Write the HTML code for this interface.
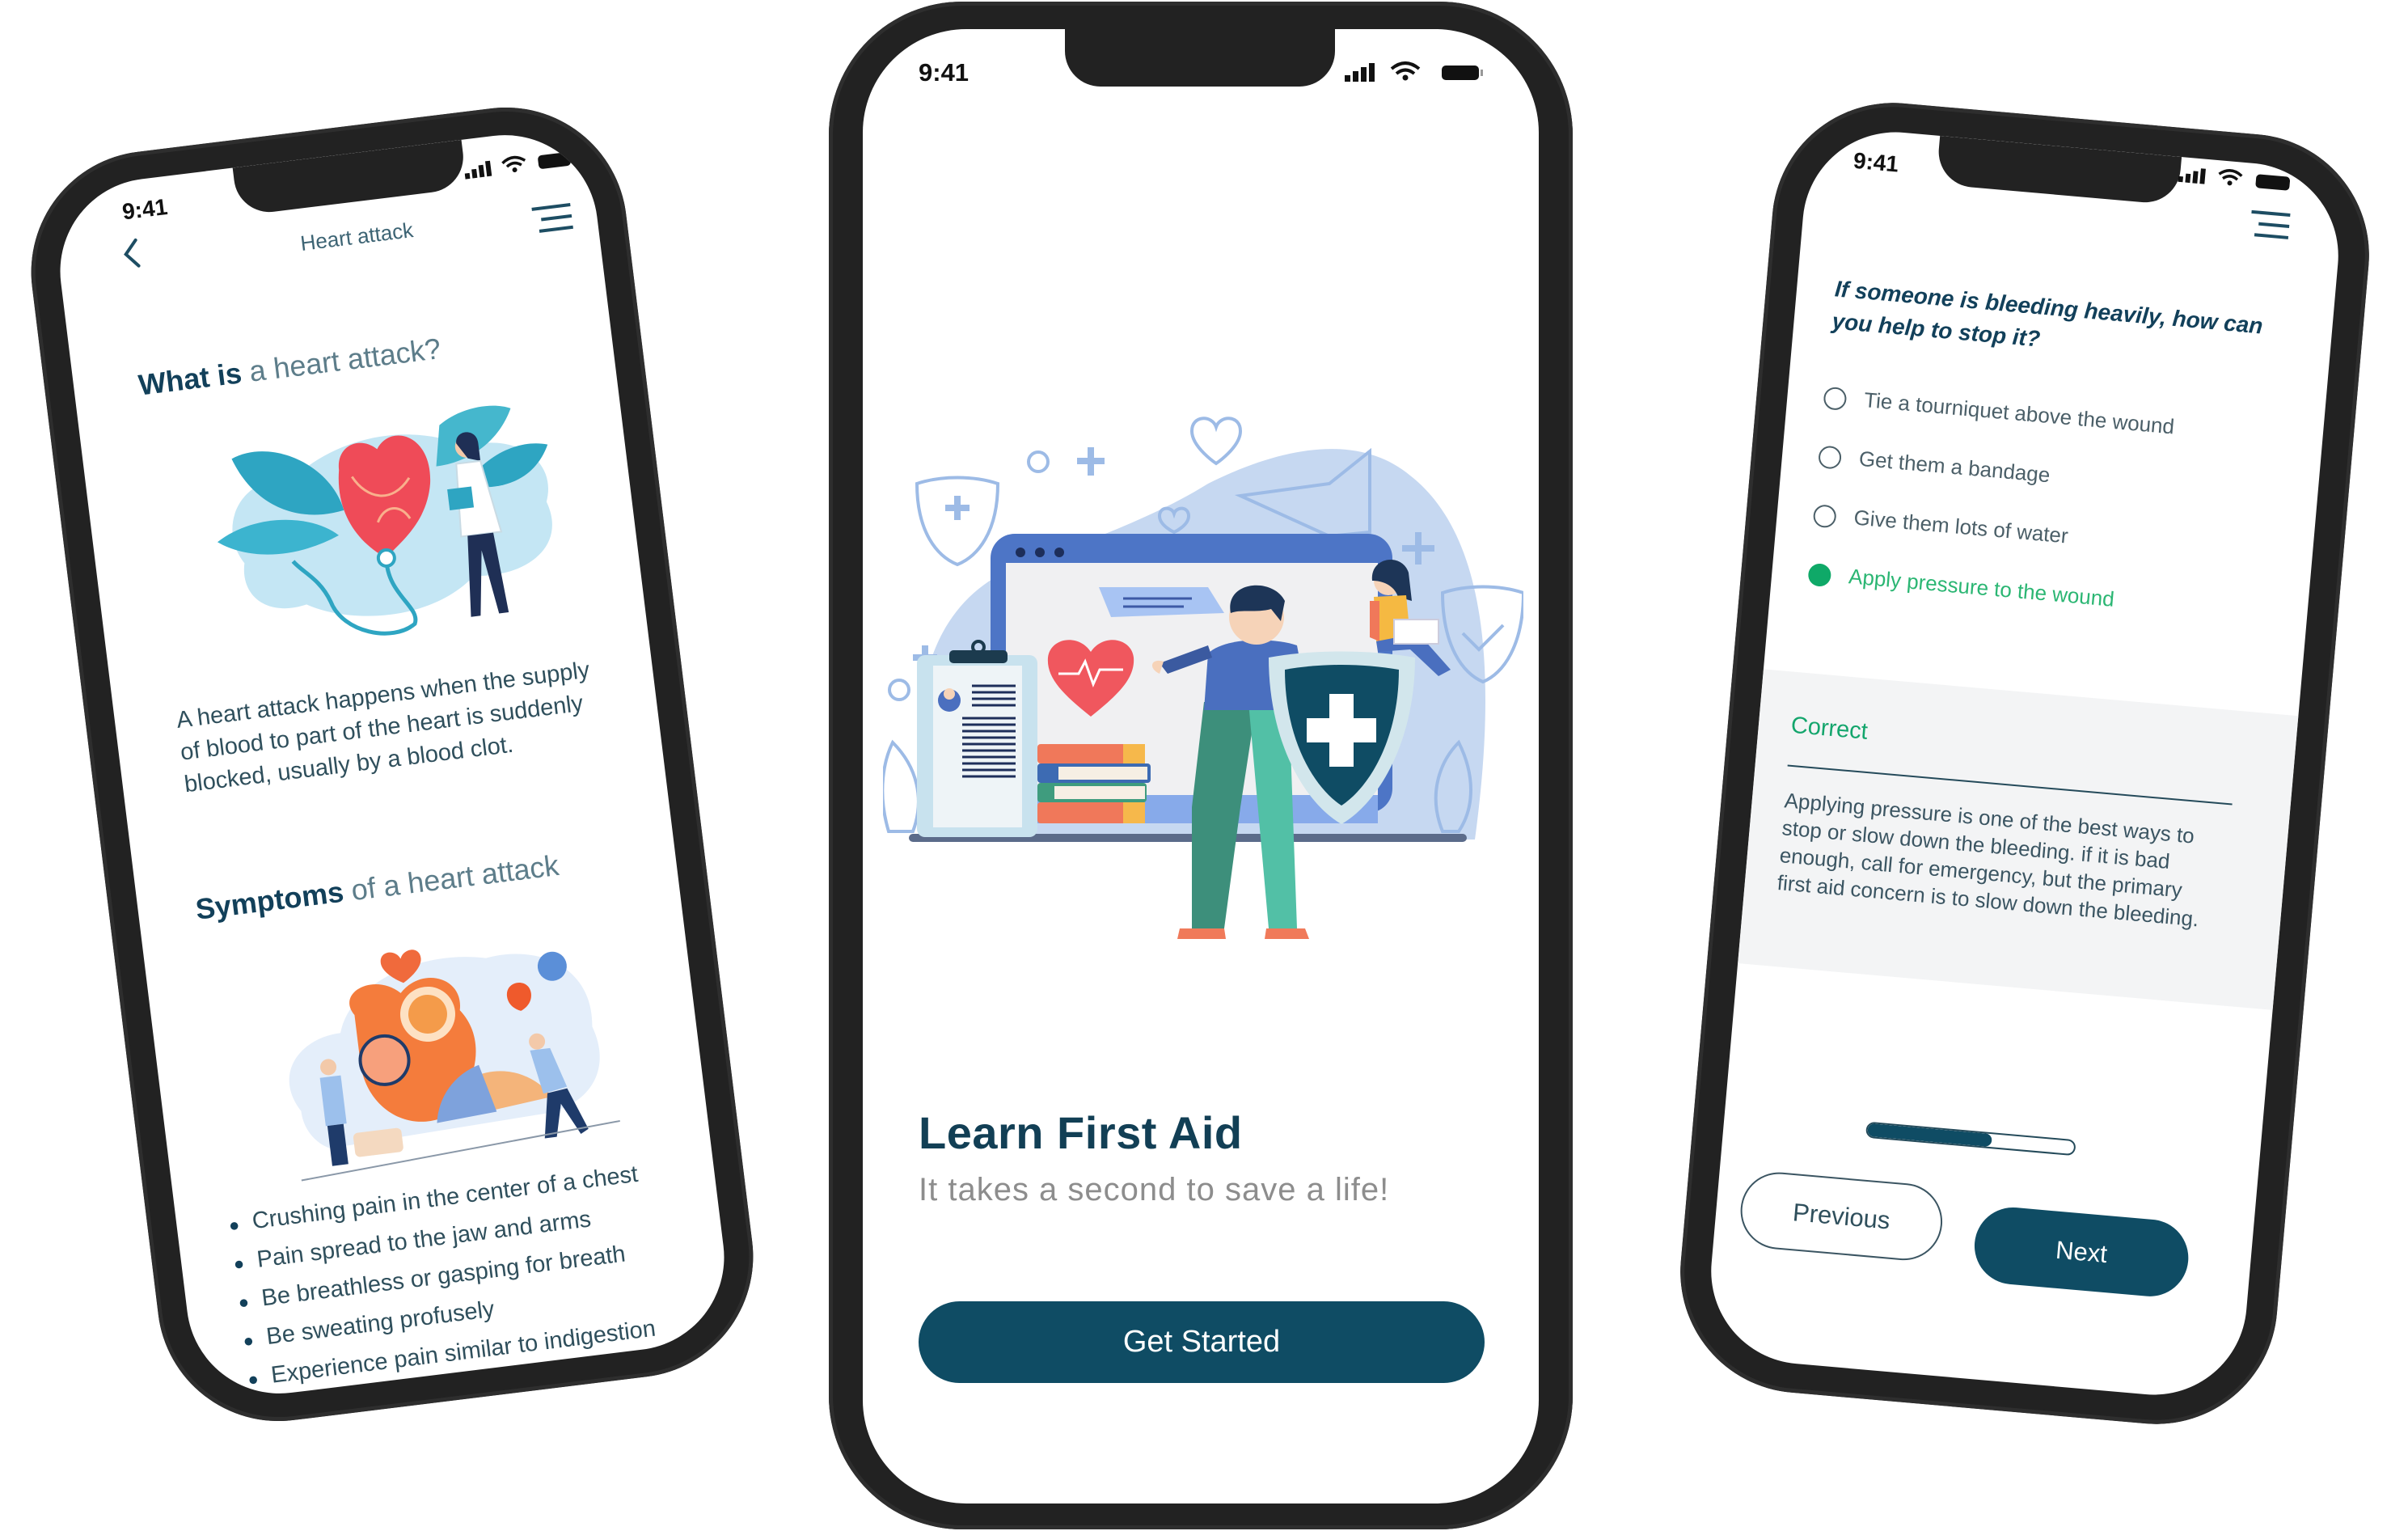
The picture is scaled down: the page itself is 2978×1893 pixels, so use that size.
<!DOCTYPE html>
<html><head><meta charset="utf-8"><style>
*{margin:0;padding:0;box-sizing:border-box}
body{width:2978px;height:1893px;background:#fff;position:relative;overflow:hidden;font-family:"Liberation Sans",sans-serif}
.phone{position:absolute;background:#222;box-shadow:inset 0 0 0 5px #2e2e2e}
.screen{position:absolute;background:#fff;overflow:hidden}
.a{position:absolute;white-space:nowrap}
.notch{position:absolute;background:#222;border-radius:0 0 44px 44px}
</style></head><body>

<!-- LEFT PHONE -->
<div class="phone" style="left:115px;top:155px;width:740px;height:1580px;border-radius:150px;transform:rotate(-7deg)">
 <div class="screen" style="left:36px;top:34px;width:668px;height:1512px;border-radius:115px">
  <div class="notch" style="left:228px;top:0;width:285px;height:60px"></div>
  <div class="a" style="left:86px;top:22px;font-size:28px;font-weight:bold;color:#111">9:41</div>
  <svg class="a" style="left:512px;top:26px" width="140" height="26" viewBox="0 0 140 26"><rect x="0" y="16" width="6" height="7" fill="#111"/><rect x="9" y="12" width="6" height="11" fill="#111"/><rect x="18" y="8" width="6" height="15" fill="#111"/><rect x="27" y="4" width="6" height="19" fill="#111"/><path d="M48 9 Q62 -2 76 9 M53 14 Q62 7 71 14" stroke="#111" stroke-width="3.5" fill="none"/><circle cx="62" cy="19" r="3" fill="#111"/><rect x="92" y="5" width="40" height="17" rx="5" fill="#111"/></svg>
  <svg class="a" style="left:76px;top:70px" width="30" height="40"><path d="M22 4 L8 20 L22 36" stroke="#1d4d63" stroke-width="4" fill="none" stroke-linecap="round"/></svg>
  <div class="a" style="left:300px;top:88px;font-size:26px;color:#3d6474">Heart attack</div>
  <svg class="a" style="left:585px;top:92px" width="56" height="40"><path d="M4 4H52M14 18H52M10 32H52" stroke="#1d4d63" stroke-width="4"/></svg>
  <div class="a" style="left:80px;top:232px;font-size:36px;color:#5d7d8a"><b style="color:#12405a">What is</b> a heart attack?</div>
  <svg class="a" style="left:143px;top:317px" width="440" height="290" viewBox="0 0 440 290">
   <path d="M40 170 C10 120 50 60 110 75 C170 30 260 20 330 60 C390 50 440 90 420 140 C440 200 380 230 320 220 C260 270 160 260 110 230 C60 240 30 210 40 170Z" fill="#c4e6f4"/>
   <path d="M40 40 C90 20 160 60 170 120 C110 130 60 100 40 40Z" fill="#2ea5c2"/>
   <path d="M10 140 C60 110 130 120 160 150 C110 170 50 170 10 140Z" fill="#3cb4cf"/>
   <path d="M300 30 C330 10 370 10 390 20 C370 60 330 80 290 80Z" fill="#45b7cd"/>
   <path d="M330 100 C360 70 400 60 430 70 C410 110 370 120 330 110Z" fill="#2ea5c2"/>
   <path d="M170 70 C170 40 200 30 220 50 C240 20 290 40 280 100 C270 150 230 170 215 185 C180 160 160 120 170 70Z" fill="#ef4b58"/>
   <path d="M185 80 C200 110 230 120 255 90 M210 140 C220 120 240 120 250 140" stroke="#f9b08c" stroke-width="3" fill="none"/>
   <path d="M215 185 C210 230 250 250 240 270 C210 290 150 270 140 230 C130 200 110 190 100 175" stroke="#2ea5c2" stroke-width="5" fill="none"/>
   <circle cx="215" cy="185" r="10" fill="#fff" stroke="#2ea5c2" stroke-width="4"/>
   <circle cx="330" cy="60" r="14" fill="#f3c9a9"/><path d="M318 55 C318 38 345 38 345 58 L345 80 L330 75Z" fill="#1f2f55"/>
   <path d="M315 80 L345 80 L360 170 L310 170Z" fill="#fff" stroke="#c9dbe4" stroke-width="2"/>
   <rect x="300" y="110" width="30" height="26" fill="#2ea5c2"/>
   <path d="M318 170 L310 270 L322 270 L333 190 L345 270 L357 270 L350 170Z" fill="#1f2f55"/>
  </svg>
  <div class="a" style="left:76px;top:650px;font-size:29px;line-height:40px;color:#2f4f5c">A heart attack happens when the supply<br>of blood to part of the heart is suddenly<br>blocked, usually by a blood clot.</div>
  <div class="a" style="left:71px;top:884px;font-size:36px;color:#5d7d8a"><b style="color:#12405a">Symptoms</b> of a heart attack</div>
  <svg class="a" style="left:140px;top:968px" width="420" height="290" viewBox="0 0 420 290">
   <path d="M30 200 C0 150 40 110 90 110 C110 50 200 20 280 40 C350 30 410 70 400 140 C420 200 380 240 320 240 L60 250 C40 240 30 220 30 200Z" fill="#e4eefa"/>
   <path d="M110 90 C90 60 140 40 170 70 C200 40 250 60 240 100 C270 140 250 200 200 230 C150 240 110 200 110 150 Z" fill="#f47c3c"/>
   <circle cx="200" cy="100" r="34" fill="#fde1c3"/><circle cx="200" cy="100" r="24" fill="#f49b4a"/>
   <circle cx="140" cy="150" r="30" fill="#f7a07c" stroke="#1f3b6a" stroke-width="4"/>
   <path d="M150 30 C150 15 170 15 175 28 C180 15 200 15 200 30 C200 45 175 58 175 58 C175 58 150 45 150 30Z" fill="#f06a3c"/>
   <path d="M195 235 A80 80 0 0 1 340 220 Z" fill="#f4b47a"/><path d="M195 235 A80 80 0 0 1 255 170 L270 230Z" fill="#7ea2dc"/>
   <path d="M300 90 C300 70 330 70 330 90 C330 105 315 110 315 110 C315 110 300 105 300 90Z" fill="#ef5a2c"/>
   <circle cx="360" cy="60" r="18" fill="#5b8fd8"/>
   <circle cx="70" cy="150" r="10" fill="#f3c9a9"/><rect x="58" y="162" width="26" height="60" fill="#9cc0ec"/><rect x="60" y="222" width="20" height="50" fill="#1f3b6a"/>
   <circle cx="330" cy="150" r="10" fill="#f3c9a9"/><path d="M320 160 L345 160 L360 210 L330 215Z" fill="#9cc0ec"/><path d="M335 215 L325 270 L340 270 L350 230 L370 270 L380 265 L360 212Z" fill="#1f3b6a"/>
   <rect x="90" y="235" width="60" height="30" rx="6" fill="#f4d9c0"/>
   <path d="M20 285 L420 260" stroke="#8a98a8" stroke-width="2"/>
  </svg>
  <div class="a" style="left:64px;top:1273px;font-size:29px;line-height:47px;color:#2f4f5c">
   <div><span style="font-size:22px;color:#12405a">●</span>&nbsp; Crushing pain in the center of a chest</div>
   <div><span style="font-size:22px;color:#12405a">●</span>&nbsp; Pain spread to the jaw and arms</div>
   <div><span style="font-size:22px;color:#12405a">●</span>&nbsp; Be breathless or gasping for breath</div>
   <div><span style="font-size:22px;color:#12405a">●</span>&nbsp; Be sweating profusely</div>
   <div><span style="font-size:22px;color:#12405a">●</span>&nbsp; Experience pain similar to indigestion</div>
  </div>
 </div>
</div>

<!-- CENTER PHONE -->
<div class="phone" style="left:1025px;top:2px;width:920px;height:1889px;border-radius:165px">
 <div class="screen" style="left:42px;top:34px;width:836px;height:1823px;border-radius:128px">
  <div class="notch" style="left:250px;top:0;width:334px;height:71px"></div>
  <div class="a" style="left:69px;top:36px;font-size:31px;font-weight:bold;color:#111">9:41</div>
  <svg class="a" style="left:596px;top:38px" width="180" height="30" viewBox="0 0 180 30"><rect x="0" y="19" width="7" height="8" fill="#111"/><rect x="10" y="14" width="7" height="13" fill="#111"/><rect x="20" y="9" width="7" height="18" fill="#111"/><rect x="30" y="4" width="7" height="23" fill="#111"/><path d="M58 11 Q75 -3 92 11 M64 17 Q75 8 86 17" stroke="#111" stroke-width="4" fill="none"/><circle cx="75" cy="22" r="3.5" fill="#111"/><rect x="120" y="7" width="46" height="18" rx="5" fill="#111"/><rect x="168" y="12" width="3" height="8" fill="#999"/></svg>
  <svg class="a" style="left:25px;top:477px" width="792" height="650" viewBox="1098 515 792 650">
   <path d="M1150 1040 C1130 900 1140 780 1230 720 C1320 680 1420 650 1500 600 C1600 550 1690 540 1750 590 C1840 660 1860 820 1830 1040 Z" fill="#c6d8f1"/>
   <g fill="none" stroke="#9dbbe6" stroke-width="4">
    <path d="M1140 600 C1170 590 1210 590 1240 600 C1240 660 1215 690 1190 700 C1165 690 1140 660 1140 600Z"/>
    <path d="M1175 630H1205M1190 615V645" stroke-width="8"/>
    <circle cx="1290" cy="573" r="12"/>
    <path d="M1355 555V590M1338 572H1372" stroke-width="8"/>
    <path d="M1480 535 C1480 515 1505 515 1510 530 C1515 515 1540 515 1540 535 C1540 555 1510 575 1510 575 C1510 575 1480 555 1480 535Z"/>
    <path d="M1540 615 L1650 600 L1700 560 L1700 660 L1650 665 Z"/>
    <path d="M1760 660V700M1740 680H1780" stroke-width="8"/>
    <path d="M1790 735 C1820 725 1860 725 1890 735 C1890 800 1865 835 1840 845 C1815 835 1790 800 1790 735Z"/>
    <path d="M1815 785 L1835 805 L1865 775"/>
    <circle cx="1118" cy="855" r="12"/>
    <path d="M1150 800V830M1135 815H1165" stroke-width="8"/>
    <path d="M1105 1030 C1090 980 1100 940 1110 920 C1140 950 1150 990 1135 1030Z"/>
    <path d="M1790 1030 C1770 980 1790 940 1810 920 C1830 960 1830 1000 1810 1030Z"/>
    <path d="M1440 640 C1440 628 1455 628 1458 637 C1461 628 1476 628 1476 640 C1476 652 1458 660 1458 660 C1458 660 1440 652 1440 640Z"/>
   </g>
   <rect x="1231" y="662" width="497" height="345" rx="30" fill="#4d75c6"/>
   <rect x="1250" y="698" width="460" height="290" fill="#f0f0f2"/>
   <circle cx="1268" cy="685" r="6" fill="#1d2e5a"/><circle cx="1292" cy="685" r="6" fill="#1d2e5a"/><circle cx="1316" cy="685" r="6" fill="#1d2e5a"/>
   <rect x="1250" y="985" width="460" height="35" fill="#87aaea"/>
   <path d="M1365 728 L1500 728 L1520 760 L1380 765Z" fill="#a8c4f3"/>
   <path d="M1395 742H1480M1395 752H1470" stroke="#3d5aa6" stroke-width="3"/>
   <path d="M1355 888 C1320 860 1300 840 1302 815 C1305 790 1340 785 1355 808 C1370 785 1405 790 1408 815 C1410 840 1390 860 1355 888Z" fill="#f0575e"/>
   <path d="M1315 835 H1340 L1348 820 L1358 848 L1366 830 H1395" stroke="#fff" stroke-width="3" fill="none"/>
   <rect x="1130" y="1033" width="690" height="10" rx="5" fill="#5b6b8a"/>
   <rect x="1140" y="812" width="149" height="225" rx="10" fill="#c8e2ee"/>
   <rect x="1160" y="825" width="110" height="200" fill="#eef4f7"/>
   <rect x="1180" y="806" width="72" height="16" rx="5" fill="#1c3b4e"/><circle cx="1216" cy="802" r="7" fill="none" stroke="#1c3b4e" stroke-width="4"/>
   <circle cx="1180" cy="868" r="14" fill="#4b6fbf"/><circle cx="1180" cy="860" r="7" fill="#f6d3b8"/>
   <g stroke="#1d2e5a" stroke-width="3"><path d="M1208 850H1262M1208 858H1262M1208 866H1262M1208 874H1262M1196 890H1262M1196 898H1262M1196 906H1262M1196 914H1262M1196 922H1262M1196 930H1262M1196 938H1262M1196 946H1262M1196 954H1262M1196 962H1262"/></g>
   <rect x="1289" y="922" width="133" height="24" rx="4" fill="#f0785a"/><rect x="1395" y="922" width="27" height="24" fill="#f6b84b"/>
   <rect x="1289" y="946" width="140" height="24" rx="4" fill="#3d6bb3"/><rect x="1315" y="950" width="110" height="16" fill="#f6efe4"/>
   <rect x="1289" y="970" width="135" height="24" rx="4" fill="#3f9c7e"/><rect x="1310" y="974" width="112" height="16" fill="#f6efe4"/>
   <rect x="1289" y="994" width="133" height="26" rx="4" fill="#f0785a"/><rect x="1395" y="994" width="27" height="26" fill="#f6b84b"/>
   <circle cx="1723" cy="720" r="18" fill="#f6d3b8"/><path d="M1703 720 C1700 690 1740 685 1748 710 L1752 745 L1735 740 C1730 725 1715 720 1703 720Z" fill="#1d3557"/>
   <path d="M1705 740 L1745 738 L1750 790 L1708 795Z" fill="#f5b942"/><path d="M1700 745 L1712 745 L1712 795 L1700 790Z" fill="#f0785a"/>
   <path d="M1708 795 L1760 785 L1800 830 L1785 838 L1750 805 L1710 808Z" fill="#4a6fbf"/>
   <rect x="1730" y="768" width="55" height="30" fill="#fff" stroke="#ccd" stroke-width="2"/>
   <path d="M1480 1000 L1495 870 L1560 870 L1540 1000 L1520 1150 L1480 1150Z" fill="#3d8f7b"/>
   <path d="M1550 870 L1600 870 L1610 1150 L1575 1150Z" fill="#52c0a6"/>
   <path d="M1465 1150 L1520 1150 L1522 1163 L1462 1163Z" fill="#f07a5a"/><path d="M1572 1150 L1620 1150 L1625 1163 L1570 1163Z" fill="#f07a5a"/>
   <path d="M1500 810 C1520 790 1580 790 1610 800 L1625 880 L1495 880Z" fill="#4a6fbf"/>
   <path d="M1505 815 L1450 835 L1440 822 L1500 800Z" fill="#3b5aa0"/>
   <path d="M1445 820 C1430 815 1425 828 1440 835Z" fill="#f6d3b8"/>
   <circle cx="1560" cy="765" r="34" fill="#f6d3b8"/><path d="M1528 760 C1520 720 1580 715 1595 745 L1590 770 L1578 755 C1560 760 1540 755 1528 760Z" fill="#1d3557"/>
   <path d="M1575 815 C1630 805 1700 805 1756 815 C1756 920 1710 995 1665 1021 C1620 995 1575 920 1575 815Z" fill="#d2e6ec"/>
   <path d="M1595 830 C1640 822 1690 822 1736 830 C1736 915 1700 975 1665 998 C1630 975 1595 915 1595 830Z" fill="#0f4c64"/>
   <path d="M1650 860 H1680 V890 H1708 V920 H1680 V950 H1650 V920 H1622 V890 H1650Z" fill="#fff"/>
  </svg>
  <div class="a" style="left:69px;top:1332px;font-size:56px;font-weight:bold;color:#123f55;letter-spacing:0.5px">Learn First Aid</div>
  <div class="a" style="left:69px;top:1413px;font-size:40px;color:#8d8d8d;letter-spacing:1px">It takes a second to save a life!</div>
  <div class="a" style="left:69px;top:1573px;width:700px;height:101px;border-radius:51px;background:#0f4c64;color:#fff;font-size:38px;text-align:center;line-height:101px">Get Started</div>
 </div>
</div>

<!-- RIGHT PHONE -->
<div class="phone" style="left:2134px;top:144px;width:740px;height:1600px;border-radius:150px;transform:rotate(5deg)">
 <div class="screen" style="left:38px;top:36px;width:664px;height:1528px;border-radius:115px">
  <div class="notch" style="left:160px;top:0;width:300px;height:60px"></div>
  <div class="a" style="left:56px;top:24px;font-size:28px;font-weight:bold;color:#111">9:41</div>
  <svg class="a" style="left:458px;top:8px" width="150" height="26" viewBox="0 0 150 26"><rect x="0" y="16" width="6" height="7" fill="#111"/><rect x="9" y="12" width="6" height="11" fill="#111"/><rect x="18" y="8" width="6" height="15" fill="#111"/><rect x="27" y="4" width="6" height="19" fill="#111"/><path d="M50 9 Q64 -2 78 9 M55 14 Q64 7 73 14" stroke="#111" stroke-width="3.5" fill="none"/><circle cx="64" cy="19" r="3" fill="#111"/><rect x="96" y="5" width="42" height="17" rx="5" fill="#111"/></svg>
  <svg class="a" style="left:548px;top:56px" width="56" height="40"><path d="M4 4H52M14 18H52M10 32H52" stroke="#1d4d63" stroke-width="4"/></svg>
  <div class="a" style="left:47px;top:180px;font-size:28px;line-height:40px;font-style:italic;font-weight:bold;color:#12405a">If someone is bleeding heavily, how can<br>you help to stop it?</div>
  <div class="a" style="left:45px;top:318px;font-size:26px;color:#4b5f68">
   <div style="height:73px"><span style="display:inline-block;width:28px;height:28px;border:2px solid #4b5f68;border-radius:50%;vertical-align:middle;margin-right:22px"></span>Tie a tourniquet above the wound</div>
   <div style="height:73px"><span style="display:inline-block;width:28px;height:28px;border:2px solid #4b5f68;border-radius:50%;vertical-align:middle;margin-right:22px"></span>Get them a bandage</div>
   <div style="height:73px"><span style="display:inline-block;width:28px;height:28px;border:2px solid #4b5f68;border-radius:50%;vertical-align:middle;margin-right:22px"></span>Give them lots of water</div>
   <div style="height:73px;color:#2bb673"><span style="display:inline-block;width:28px;height:28px;background:#0fa968;border-radius:50%;vertical-align:middle;margin-right:22px"></span>Apply pressure to the wound</div>
  </div>
  <div class="a" style="left:0;top:676px;width:664px;height:365px;background:#f3f4f5"></div>
  <div class="a" style="left:40px;top:726px;font-size:29px;color:#13a56c">Correct</div>
  <div class="a" style="left:40px;top:791px;width:552px;height:2px;background:#244a5a"></div>
  <div class="a" style="left:40px;top:818px;font-size:26px;line-height:34px;color:#3b5562">Applying pressure is one of the best ways to<br>stop or slow down the bleeding. if it is bad<br>enough, call for emergency, but the primary<br>first aid concern is to slow down the bleeding.</div>
  <div class="a" style="left:176px;top:1222px;width:260px;height:20px;border:2px solid #244a5a;border-radius:10px;overflow:hidden"><div style="width:60%;height:100%;background:#0f4c64;border-radius:10px"></div></div>
  <div class="a" style="left:30px;top:1294px;width:250px;height:95px;border:2px solid #3b5562;border-radius:48px;text-align:center;line-height:91px;font-size:31px;color:#2f4f5c">Previous</div>
  <div class="a" style="left:322px;top:1312px;width:265px;height:95px;background:#0f4c64;border-radius:48px;text-align:center;line-height:95px;font-size:31px;color:#fff">Next</div>
 </div>
</div>
</body></html>
